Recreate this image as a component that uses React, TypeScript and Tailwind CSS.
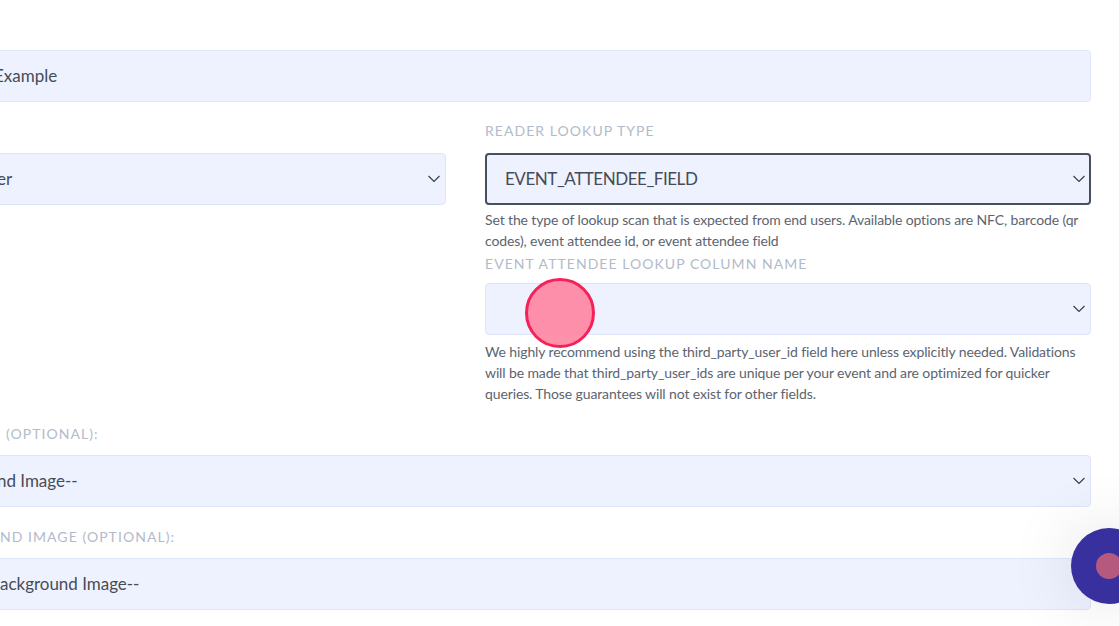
const FONT = "font-['Lato','Liberation_Sans',sans-serif]";

function Chevron() {
  return (
    <svg viewBox="0 0 12 8" className="h-[8px] w-[12px] shrink-0" fill="none" stroke="#343a46" strokeWidth="1.1">
      <path d="M0.5 1l5.5 5.5 5.5-5.5" />
    </svg>
  );
}

function Field({ text, indent, select, focused }: { text?: string; indent: string; select?: boolean; focused?: boolean }) {
  return (
    <div
      className={`flex h-[52px] items-center justify-between rounded-[4px] bg-[#eef2ff] text-[17px] text-[#464c57] ${indent} ${
        focused ? "border-2 border-[#484f5e] pr-[4px] tracking-[-0.45px]" : "border border-[#dfe5f8] pr-[5px] tracking-[-0.02px]"
      }`}
    >
      <span>{text}</span>
      {select && <Chevron />}
    </div>
  );
}

function Label({ children, className = "" }: { children: React.ReactNode; className?: string }) {
  return <div className={`text-[14px] leading-[20px] tracking-[1.05px] whitespace-nowrap text-[#b2bbc9] ${className}`}>{children}</div>;
}

export default function App() {
  return (
    <div className={`relative h-[626px] w-[1120px] overflow-hidden bg-white ${FONT}`}>
      <div className="ml-[-160px] flex w-[1251px] flex-col pt-[50px]">
        <Field text="Example" indent="pl-[153px]" />

        <div className="mt-[19px] flex gap-[39px]">
          <div className="w-[606px] pt-[32px]">
            <Field text="er" indent="pl-[156px]" select />
          </div>
          <div className="w-[606px]">
            <Label className="h-[20px]">READER LOOKUP TYPE</Label>
            <div className="mt-[12px]">
              <Field text="EVENT_ATTENDEE_FIELD" indent="pl-[18px]" select focused />
            </div>
            <p className="mt-[4px] text-[14px] leading-[21px] tracking-[-0.12px] text-[#5c6470]">
              Set the type of lookup scan that is expected from end users. Available options are NFC, barcode (qr codes), event attendee id, or event attendee field
            </p>
            <Label className="mt-[3px]">EVENT ATTENDEE LOOKUP COLUMN NAME</Label>
            <div className="mt-[9px]">
              <Field indent="pl-[19px]" select />
            </div>
            <p className="mt-[6px] text-[14px] leading-[21px] tracking-[-0.12px] text-[#5c6470]">
              We highly recommend using the third_party_user_id field here unless explicitly needed. Validations will be made that third_party_user_ids are unique per your event and are optimized for quicker queries. Those guarantees will not exist for other fields.
            </p>
          </div>
        </div>

        <Label className="mt-[20px] pl-[166px]">(OPTIONAL):</Label>
        <div className="mt-[11px]">
          <Field text="nd Image--" indent="pl-[156px]" select />
        </div>
        <Label className="mt-[20px] pl-[160px]">ND IMAGE (OPTIONAL):</Label>
        <div className="mt-[11px]">
          <Field text="ackground Image--" indent="pl-[159px]" />
        </div>
      </div>

      {/* Click marker */}
      <div className="absolute top-[278px] left-[525px] h-[70px] w-[70px] rounded-full border-[3px] border-[#f5225a] bg-[#ff7e9c]/85" />

      {/* Chat launcher */}
      <div className="absolute top-[528px] left-[1071px] flex h-[76px] w-[76px] items-center justify-center rounded-full bg-[#38309f] shadow-[0_0_70px_rgba(0,0,0,0.12)]">
        <div className="h-[26px] w-[26px] rounded-full bg-[#b5597f]" />
      </div>

      <div className="absolute top-0 right-0 h-full w-px bg-[#f1f1f3]" />
    </div>
  );
}
